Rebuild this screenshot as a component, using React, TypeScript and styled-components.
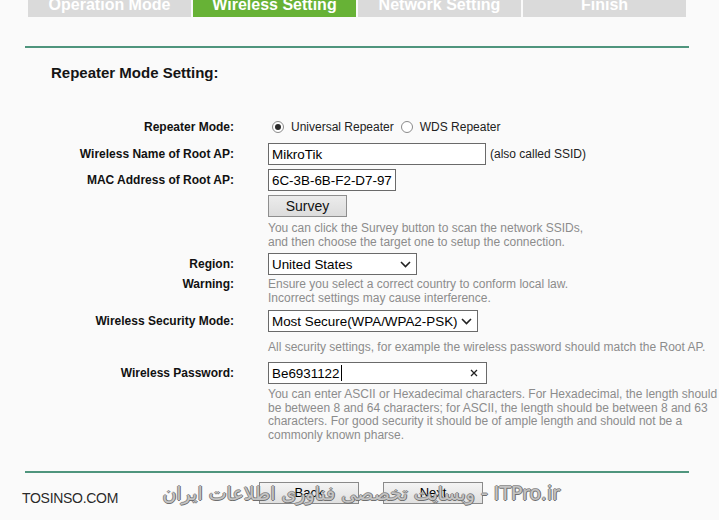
import React from "react";
import styled, { createGlobalStyle } from "styled-components";

const Global = createGlobalStyle`
  html, body { margin: 0; padding: 0; background: #fafafa; }
  body { font-family: "Liberation Sans", Arial, sans-serif; color: #111; }
`;

const Page = styled.div`
  position: relative;
  width: 719px;
  height: 520px;
  overflow: hidden;
  background: #fafafa;
`;

const TabBar = styled.div`
  display: flex;
  gap: 2px;
  padding-left: 28px;
  height: 17px;
  overflow: hidden;
`;

const Tab = styled.div<{ $active?: boolean }>`
  width: 163px;
  height: 17px;
  box-sizing: border-box;
  padding-bottom: 4px;
  display: flex;
  align-items: flex-end;
  justify-content: center;
  overflow: hidden;
  background: ${(p) => (p.$active ? "#67b236" : "#dadada")};
  color: #fff;
  font-weight: bold;
  font-size: 16px;
  line-height: 16px;
  white-space: nowrap;
`;

const Divider = styled.div<{ $mt: number }>`
  height: 2px;
  background: #4f957d;
  margin: ${(p) => p.$mt}px 30px 0 25px;
`;

const Heading = styled.div`
  margin: 16px 0 0 51px;
  font-size: 15px;
  font-weight: bold;
  line-height: 18px;
  color: #151515;
`;

const Row = styled.div<{ $mt: number; $top?: boolean }>`
  display: grid;
  grid-template-columns: 234px auto;
  column-gap: 34px;
  margin-top: ${(p) => p.$mt}px;
  align-items: ${(p) => (p.$top ? "start" : "center")};
`;

const Label = styled.div`
  text-align: right;
  font-size: 12px;
  font-weight: bold;
  line-height: 14px;
  color: #111;
  white-space: nowrap;
`;

const Cell = styled.div`
  display: flex;
  align-items: center;
  gap: 4px;
`;

const Field = styled.div<{ $w: number }>`
  width: ${(p) => p.$w}px;
  height: 22px;
  box-sizing: border-box;
  border: 1px solid #6a6a6a;
  background: #fff;
  padding: 0 3px;
  display: flex;
  align-items: center;
  font-size: 13.4px;
  color: #000;
  white-space: nowrap;
`;

const SelectBox = styled(Field)`
  justify-content: space-between;
  padding-right: 5px;
`;

const PasswordBox = styled(Field)`
  padding-right: 8px;
`;

const Caret = styled.span`
  display: inline-block;
  width: 1px;
  height: 16px;
  background: #000;
  margin-left: 1px;
`;

const Spacer = styled.span`
  flex: 1;
`;

const Plain = styled.span`
  font-size: 12px;
  color: #222;
  white-space: nowrap;
`;

const RadioGroup = styled.div`
  display: flex;
  align-items: center;
  gap: 7px;
  padding-left: 4px;
  height: 16px;
`;

const Radio = styled.span<{ $checked?: boolean }>`
  width: 12px;
  height: 12px;
  box-sizing: border-box;
  border: 1px solid #8a8a8a;
  border-radius: 50%;
  background: #fff;
  display: inline-flex;
  align-items: center;
  justify-content: center;
  &::after {
    content: "";
    width: 6px;
    height: 6px;
    border-radius: 50%;
    background: ${(p) => (p.$checked ? "#2b2b2b" : "transparent")};
  }
`;

const SurveyButton = styled.div`
  width: 79px;
  height: 22px;
  box-sizing: border-box;
  border: 1px solid #8e8e8e;
  background: linear-gradient(#ececec, #dcdcdc);
  display: flex;
  align-items: center;
  justify-content: center;
  font-size: 14px;
  color: #111;
`;

const Help = styled.div<{ $lh?: number }>`
  font-size: 12px;
  line-height: ${(p) => p.$lh ?? 14}px;
  color: #8c8c8c;
  white-space: nowrap;
`;

const ButtonBar = styled.div`
  display: flex;
  gap: 24px;
  margin-top: 9px;
  padding-left: 259px;
`;

const NavButton = styled.div`
  width: 100px;
  height: 22px;
  box-sizing: border-box;
  border: 1px solid #8a8a8a;
  background: linear-gradient(#f4f4f4, #e0e0e0);
  display: flex;
  align-items: center;
  justify-content: center;
  font-size: 13px;
  color: #000;
`;

const Watermark = styled.div`
  position: absolute;
  right: 159px;
  top: 480px;
  direction: rtl;
  font-family: "DejaVu Sans", "Liberation Sans", sans-serif;
  font-size: 19px;
  line-height: 26px;
  color: #c4c4c4;
  white-space: nowrap;
  text-shadow: 1px 0 0 #6e6e6e, -1px 0 0 #8a8a8a, 0 1px 0 #6e6e6e, 0 -1px 0 #9a9a9a;
  pointer-events: none;
`;

const Brand = styled.div`
  position: absolute;
  left: 22px;
  top: 490px;
  font-size: 14px;
  line-height: 16px;
  color: #2a2a2a;
  letter-spacing: -0.3px;
  text-shadow: 0 0 2px #fff, 0 0 2px #fff;
  pointer-events: none;
`;

const Chevron = () => (
  <svg width="11" height="7" viewBox="0 0 11 7">
    <polyline points="1,1 5.5,5.5 10,1" fill="none" stroke="#222" strokeWidth="1.6" />
  </svg>
);

const ClearIcon = () => (
  <svg width="8" height="8" viewBox="0 0 8 8">
    <path d="M1 1 L7 7 M7 1 L1 7" stroke="#222" strokeWidth="1.3" />
  </svg>
);

export default function App() {
  return (
    <>
      <Global />
      <Page>
        <TabBar>
          <Tab>Operation Mode</Tab>
          <Tab $active>Wireless Setting</Tab>
          <Tab>Network Setting</Tab>
          <Tab>Finish</Tab>
        </TabBar>
        <Divider $mt={29} />
        <Heading>Repeater Mode Setting:</Heading>

        <Row $mt={37}>
          <Label>Repeater Mode:</Label>
          <RadioGroup>
            <Radio $checked />
            <Plain>Universal Repeater</Plain>
            <Radio />
            <Plain>WDS Repeater</Plain>
          </RadioGroup>
        </Row>

        <Row $mt={8}>
          <Label>Wireless Name of Root AP:</Label>
          <Cell>
            <Field $w={218}>MikroTik</Field>
            <Plain>(also called SSID)</Plain>
          </Cell>
        </Row>

        <Row $mt={4}>
          <Label>MAC Address of Root AP:</Label>
          <Cell>
            <Field $w={128}>6C-3B-6B-F2-D7-97</Field>
          </Cell>
        </Row>

        <Row $mt={4}>
          <span />
          <Cell>
            <SurveyButton>Survey</SurveyButton>
          </Cell>
        </Row>

        <Row $mt={4}>
          <span />
          <Help>
            You can click the Survey button to scan the network SSIDs,
            <br />
            and then choose the target one to setup the connection.
          </Help>
        </Row>

        <Row $mt={4}>
          <Label>Region:</Label>
          <Cell>
            <SelectBox $w={149}>
              <span>United States</span>
              <Chevron />
            </SelectBox>
          </Cell>
        </Row>

        <Row $mt={2} $top>
          <Label>Warning:</Label>
          <Help>
            Ensure you select a correct country to conform local law.
            <br />
            Incorrect settings may cause interference.
          </Help>
        </Row>

        <Row $mt={5}>
          <Label>Wireless Security Mode:</Label>
          <Cell>
            <SelectBox $w={210}>
              <span>Most Secure(WPA/WPA2-PSK)</span>
              <Chevron />
            </SelectBox>
          </Cell>
        </Row>

        <Row $mt={8}>
          <span />
          <Help>All security settings, for example the wireless password should match the Root AP.</Help>
        </Row>

        <Row $mt={8}>
          <Label>Wireless Password:</Label>
          <Cell>
            <PasswordBox $w={219}>
              <span>Be6931122</span>
              <Caret />
              <Spacer />
              <ClearIcon />
            </PasswordBox>
          </Cell>
        </Row>

        <Row $mt={4}>
          <span />
          <Help $lh={13.7}>
            You can enter ASCII or Hexadecimal characters. For Hexadecimal, the length should
            <br />
            be between 8 and 64 characters; for ASCII, the length should be between 8 and 63
            <br />
            characters. For good security it should be of ample length and should not be a
            <br />
            commonly known pharse.
          </Help>
        </Row>

        <Divider $mt={28} />
        <ButtonBar>
          <NavButton>Back</NavButton>
          <NavButton>Next</NavButton>
        </ButtonBar>

        <Watermark>ITPro.ir - وبسایت تخصصی فناوری اطلاعات ایران</Watermark>
        <Brand>TOSINSO.COM</Brand>
      </Page>
    </>
  );
}
